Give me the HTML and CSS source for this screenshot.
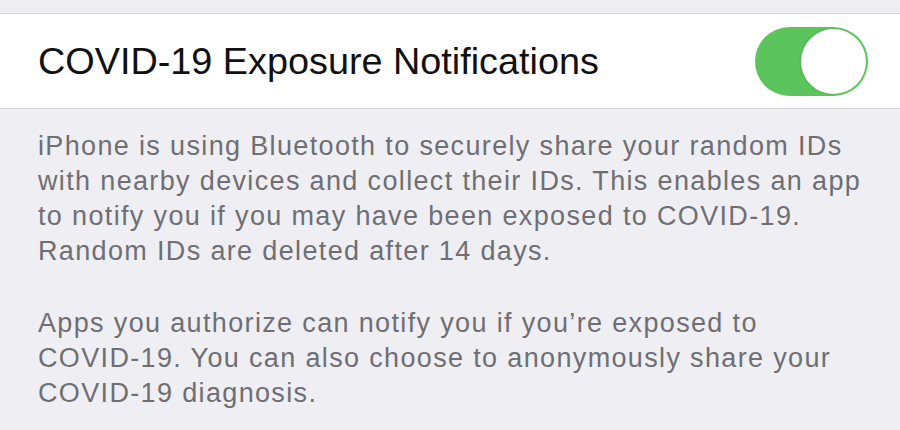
FILE: index.html
```html
<!DOCTYPE html>
<html lang="en">
<head>
    <meta charset="UTF-8">
    <meta name="viewport" content="width=device-width, initial-scale=1.0">
    <title>Exposure Notifications</title>
    <link rel="stylesheet" href="styles.css">
</head>
<body>

<div class="top-space"></div>

<div class="setting-row">
    <span class="setting-label">COVID-19 Exposure Notifications</span>
    <div class="toggle on">
        <div class="knob"></div>
    </div>
</div>

<div class="setting-footer">
    <p>iPhone is using Bluetooth to securely share your random IDs with nearby devices and collect their IDs. This enables an app to notify you if you may have been exposed to COVID&#8209;19. Random IDs are deleted after 14 days.</p>
    <p>Apps you authorize can notify you if you’re exposed to COVID&#8209;19. You can also choose to anonymously share your COVID&#8209;19 diagnosis.</p>
</div>

</body>
</html>
```

FILE: styles.css
```css
body {
    margin: 0;
    background-color: #efeff3;
    font-family: "Liberation Sans", Arial, sans-serif;
}

.top-space {
    height: 13px;
}

.setting-row {
    display: flex;
    align-items: center;
    justify-content: space-between;
    height: 94px;
    padding: 0 32px 0 38px;
    background-color: #fff;
    border-top: 1px solid #d6d6da;
    border-bottom: 1px solid #d6d6da;
}

.setting-label {
    font-size: 37.8px;
    color: #111;
}

.toggle {
    width: 113px;
    height: 69px;
    border-radius: 35px;
    background-color: #5cc45c;
    display: flex;
    align-items: center;
    justify-content: flex-end;
    padding: 0 2px;
    box-sizing: border-box;
}

.knob {
    width: 65px;
    height: 65px;
    border-radius: 50%;
    background-color: #fff;
    box-shadow: -1px 0 2px rgba(0, 0, 0, 0.12);
}

.setting-footer {
    padding: 20px 26px 0 38px;
    font-size: 27px;
    line-height: 35px;
    letter-spacing: 1.35px;
    color: #6e6e73;
}

.setting-footer p {
    margin: 0 0 37px;
}
```
